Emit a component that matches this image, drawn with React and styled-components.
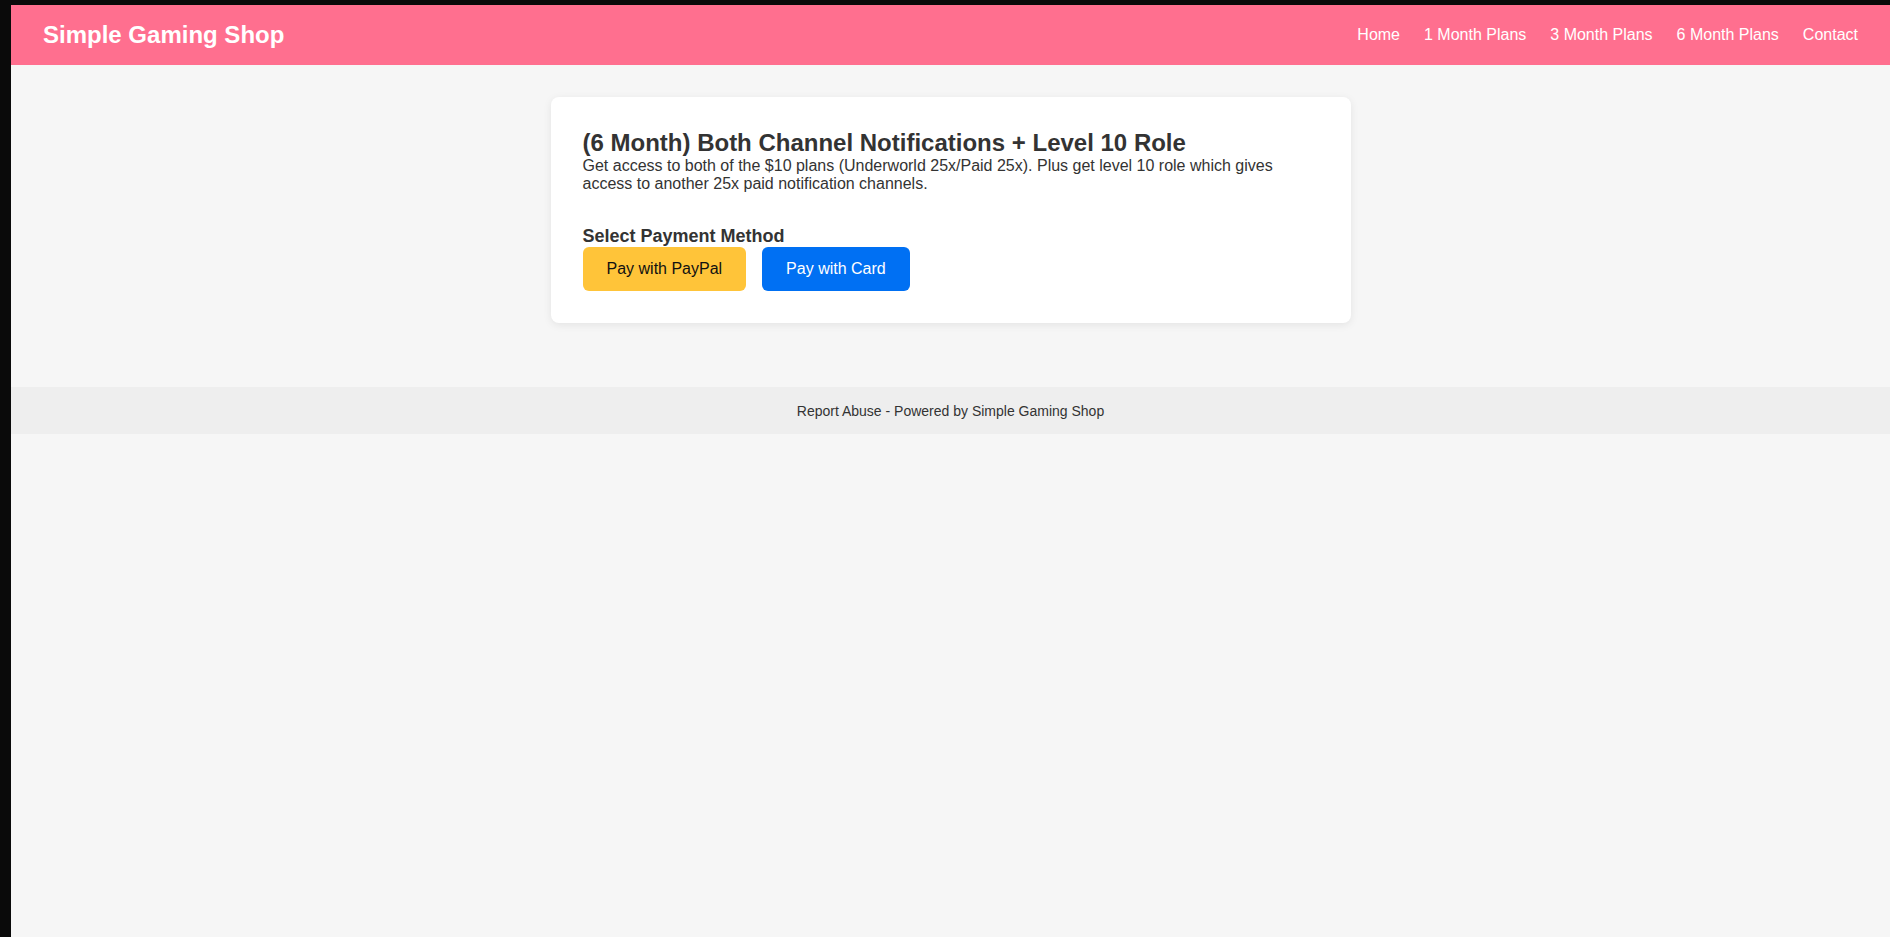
import styled, { createGlobalStyle } from 'styled-components'

const GlobalStyle = createGlobalStyle`
  html {
    background: #0a0a0a;
    min-height: 100%;
  }
  body {
    margin: 5px 0 0 11px;
    min-height: calc(100vh - 5px);
    background: #f6f6f6;
    font-family: 'Liberation Sans', Arial, sans-serif;
    color: #333;
  }
  * {
    box-sizing: border-box;
  }
`

const links = ['Home', '1 Month Plans', '3 Month Plans', '6 Month Plans', 'Contact']

function App() {
  return (
    <>
      <GlobalStyle />
      <Header>
        <Brand>Simple Gaming Shop</Brand>
        <Nav>
          {links.map((l) => (
            <NavLink key={l} href='#'>
              {l}
            </NavLink>
          ))}
        </Nav>
      </Header>
      <Main>
        <Card>
          <Title>(6 Month) Both Channel Notifications + Level 10 Role</Title>
          <Desc>
            Get access to both of the $10 plans (Underworld 25x/Paid 25x). Plus
            get level 10 role which gives access to another 25x paid
            notification channels.
          </Desc>
          <SubTitle>Select Payment Method</SubTitle>
          <Buttons>
            <PayButton $variant='paypal'>Pay with PayPal</PayButton>
            <PayButton $variant='card'>Pay with Card</PayButton>
          </Buttons>
        </Card>
      </Main>
      <Footer>Report Abuse - Powered by Simple Gaming Shop</Footer>
    </>
  )
}

export default App

const Header = styled.header`
  display: flex;
  align-items: center;
  justify-content: space-between;
  height: 60px;
  padding: 0 32px;
  background: #ff6f8f;
  color: #fff;
`

const Brand = styled.div`
  font-size: 24px;
  font-weight: bold;
`

const Nav = styled.nav`
  display: flex;
  gap: 24px;
  margin-top: -1px;
`

const NavLink = styled.a`
  color: #fff;
  font-size: 16px;
  text-decoration: none;
`

const Main = styled.main`
  padding: 32px 0 64px;
  display: flex;
  justify-content: center;
`

const Card = styled.div`
  width: 800px;
  background: #fff;
  border-radius: 8px;
  box-shadow: 0 2px 8px rgba(0, 0, 0, 0.08);
  padding: 32px;
`

const Title = styled.h2`
  margin: 0;
  font-size: 24px;
  line-height: 28px;
  color: #333;
`

const Desc = styled.p`
  margin: 0;
  font-size: 16px;
  line-height: 18px;
`

const SubTitle = styled.h3`
  margin: 33px 0 0;
  font-size: 18px;
  line-height: 21px;
  color: #333;
`

const Buttons = styled.div`
  display: flex;
  gap: 16px;
`

const PayButton = styled.button`
  height: 44px;
  padding: 0 24px;
  border: none;
  border-radius: 6px;
  font-family: 'Liberation Sans', Arial, sans-serif;
  font-size: 16px;
  cursor: pointer;
  background: ${(p) => (p.$variant === 'paypal' ? '#ffc439' : '#0070f3')};
  color: ${(p) => (p.$variant === 'paypal' ? '#111' : '#fff')};
`

const Footer = styled.footer`
  height: 47px;
  display: flex;
  align-items: center;
  justify-content: center;
  background: #eeeeee;
  font-size: 14px;
  color: #333;
`
